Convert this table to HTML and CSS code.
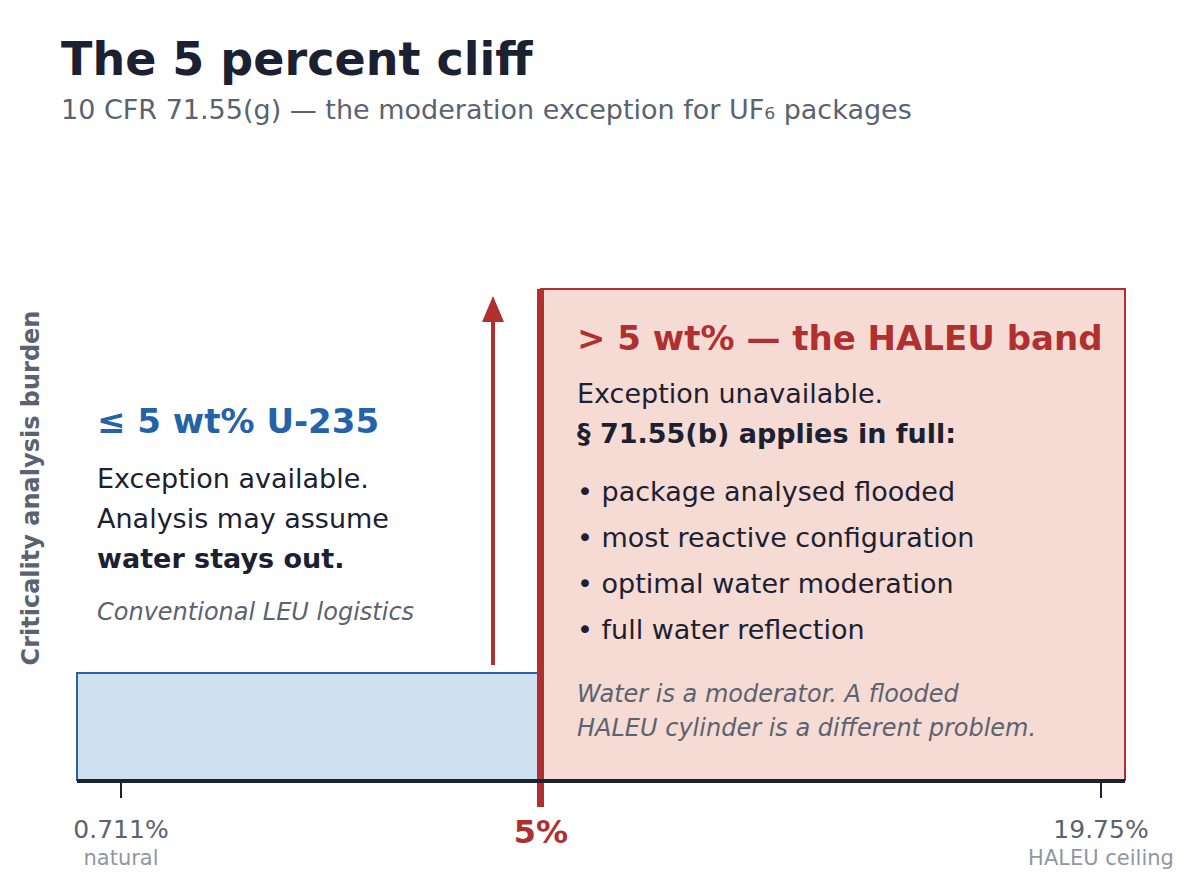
FILE: index.html
```html
<!DOCTYPE html>
<html lang="en">
<head>
<meta charset="utf-8">
<title>The 5 percent cliff</title>
<link rel="stylesheet" href="styles.css">
</head>
<body>
<div class="page">
  <header class="header">
    <h1 class="title">The 5 percent cliff</h1>
    <p class="subtitle">10 CFR 71.55(g) — the moderation exception for UF₆ packages</p>
  </header>

  <div class="chart">
    <div class="ylabel">Criticality analysis burden</div>

    <div class="band band-low"></div>
    <div class="band band-high"></div>
    <div class="cliff-line"></div>
    <div class="axis"></div>
    <div class="tick tick-natural"></div>
    <div class="tick tick-haleu"></div>

    <svg class="arrow" width="24" height="369" viewBox="0 0 24 369" aria-hidden="true">
      <polygon points="12,0 1,26 23,26" fill="#b03030"/>
      <line x1="12" y1="22" x2="12" y2="369" stroke="#b03030" stroke-width="4"/>
    </svg>

    <div class="note note-low">
      <div class="note-title blue">≤ 5 wt% U-235</div>
      <div class="note-body">
        <div>Exception available.</div>
        <div>Analysis may assume</div>
        <div class="strong">water stays out.</div>
      </div>
      <div class="note-italic">Conventional LEU logistics</div>
    </div>

    <div class="note note-high">
      <div class="note-title red">&gt; 5 wt% — the HALEU band</div>
      <div class="note-body lead">
        <div>Exception unavailable.</div>
        <div class="strong">§ 71.55(b) applies in full:</div>
      </div>
      <ul class="bullets">
        <li>• package analysed flooded</li>
        <li>• most reactive configuration</li>
        <li>• optimal water moderation</li>
        <li>• full water reflection</li>
      </ul>
      <div class="note-italic tail">Water is a moderator. A flooded<br>HALEU cylinder is a different problem.</div>
    </div>

    <div class="xlabel x-natural">
      <div class="xval">0.711%</div>
      <div class="xsub">natural</div>
    </div>
    <div class="xlabel x-cliff">
      <div class="xval-cliff">5%</div>
    </div>
    <div class="xlabel x-haleu">
      <div class="xval">19.75%</div>
      <div class="xsub">HALEU ceiling</div>
    </div>
  </div>
</div>
</body>
</html>
```

FILE: styles.css
```css
html, body {
  margin: 0;
  padding: 0;
  background: #ffffff;
}

body {
  font-family: "DejaVu Sans", "Liberation Sans", sans-serif;
  color: #1b2130;
}

.page {
  width: 1201px;
  height: 881px;
  overflow: hidden;
}

.header {
  height: 140px;
  box-sizing: border-box;
  padding: 32px 0 0 61px;
}

.title {
  margin: 0;
  font-size: 46px;
  line-height: 54px;
  font-weight: bold;
  color: #1b2130;
}

.subtitle {
  margin: 8px 0 0 0;
  font-size: 27px;
  line-height: 32px;
  color: #5b6270;
}

.chart {
  position: relative;
  height: 741px;
}

.ylabel {
  position: absolute;
  left: -169px;
  top: 333.5px;
  width: 400px;
  height: 28px;
  line-height: 28px;
  font-size: 24px;
  font-weight: bold;
  color: #5b6270;
  text-align: center;
  white-space: nowrap;
  transform: rotate(-90deg);
}

.band {
  position: absolute;
  box-sizing: border-box;
  border-width: 2px;
  border-style: solid;
}

.band-low {
  left: 76px;
  top: 532px;
  width: 466px;
  height: 109px;
  background: #cfe0f1;
  border-color: #2a62a8;
}

.band-high {
  left: 540px;
  top: 148px;
  width: 586px;
  height: 493px;
  background: #f6dbd5;
  border-color: #b03030;
}

.cliff-line {
  position: absolute;
  left: 537px;
  top: 149px;
  width: 7px;
  height: 518px;
  background: #b03030;
}

.axis {
  position: absolute;
  left: 77px;
  top: 639px;
  width: 1048px;
  height: 4px;
  background: #1b2130;
}

.tick {
  position: absolute;
  top: 642px;
  width: 2px;
  height: 16px;
  background: #1b2130;
}

.tick-natural { left: 120px; }
.tick-haleu { left: 1100px; }

.arrow {
  position: absolute;
  left: 481px;
  top: 156px;
}

.note {
  position: absolute;
  white-space: nowrap;
}

.note-low {
  left: 97px;
  top: 261.2px;
}

.note-high {
  left: 577px;
  top: 178.2px;
}

.note-title {
  font-size: 34px;
  line-height: 40px;
  font-weight: bold;
}

.blue { color: #2563a8; }
.red { color: #b03030; }

.note-body {
  margin-top: 17.4px;
  font-size: 27px;
  line-height: 40px;
  color: #1b2130;
}

.note-body.lead {
  margin-top: 16px;
}

.strong {
  font-weight: bold;
}

.note-italic {
  margin-top: 18px;
  font-size: 24px;
  line-height: 30px;
  font-style: italic;
  color: #5b6270;
}

.note-italic.tail {
  margin-top: 24px;
  line-height: 34px;
}

.bullets {
  list-style: none;
  margin: 15px 0 0 0;
  padding: 0;
  font-size: 27px;
  line-height: 46px;
  color: #1b2130;
}

.xlabel {
  position: absolute;
  top: 675.8px;
  width: 240px;
  display: flex;
  flex-direction: column;
  align-items: center;
  white-space: nowrap;
}

.x-natural { left: 1px; }
.x-cliff { left: 421px; top: 674px; }
.x-haleu { left: 981px; }

.xval {
  font-size: 25px;
  line-height: 28px;
  color: #5b6270;
}

.xsub {
  margin-top: 2px;
  font-size: 21px;
  line-height: 24px;
  color: #9097a0;
}

.xval-cliff {
  font-size: 32px;
  line-height: 36px;
  font-weight: bold;
  color: #b03030;
}
```
